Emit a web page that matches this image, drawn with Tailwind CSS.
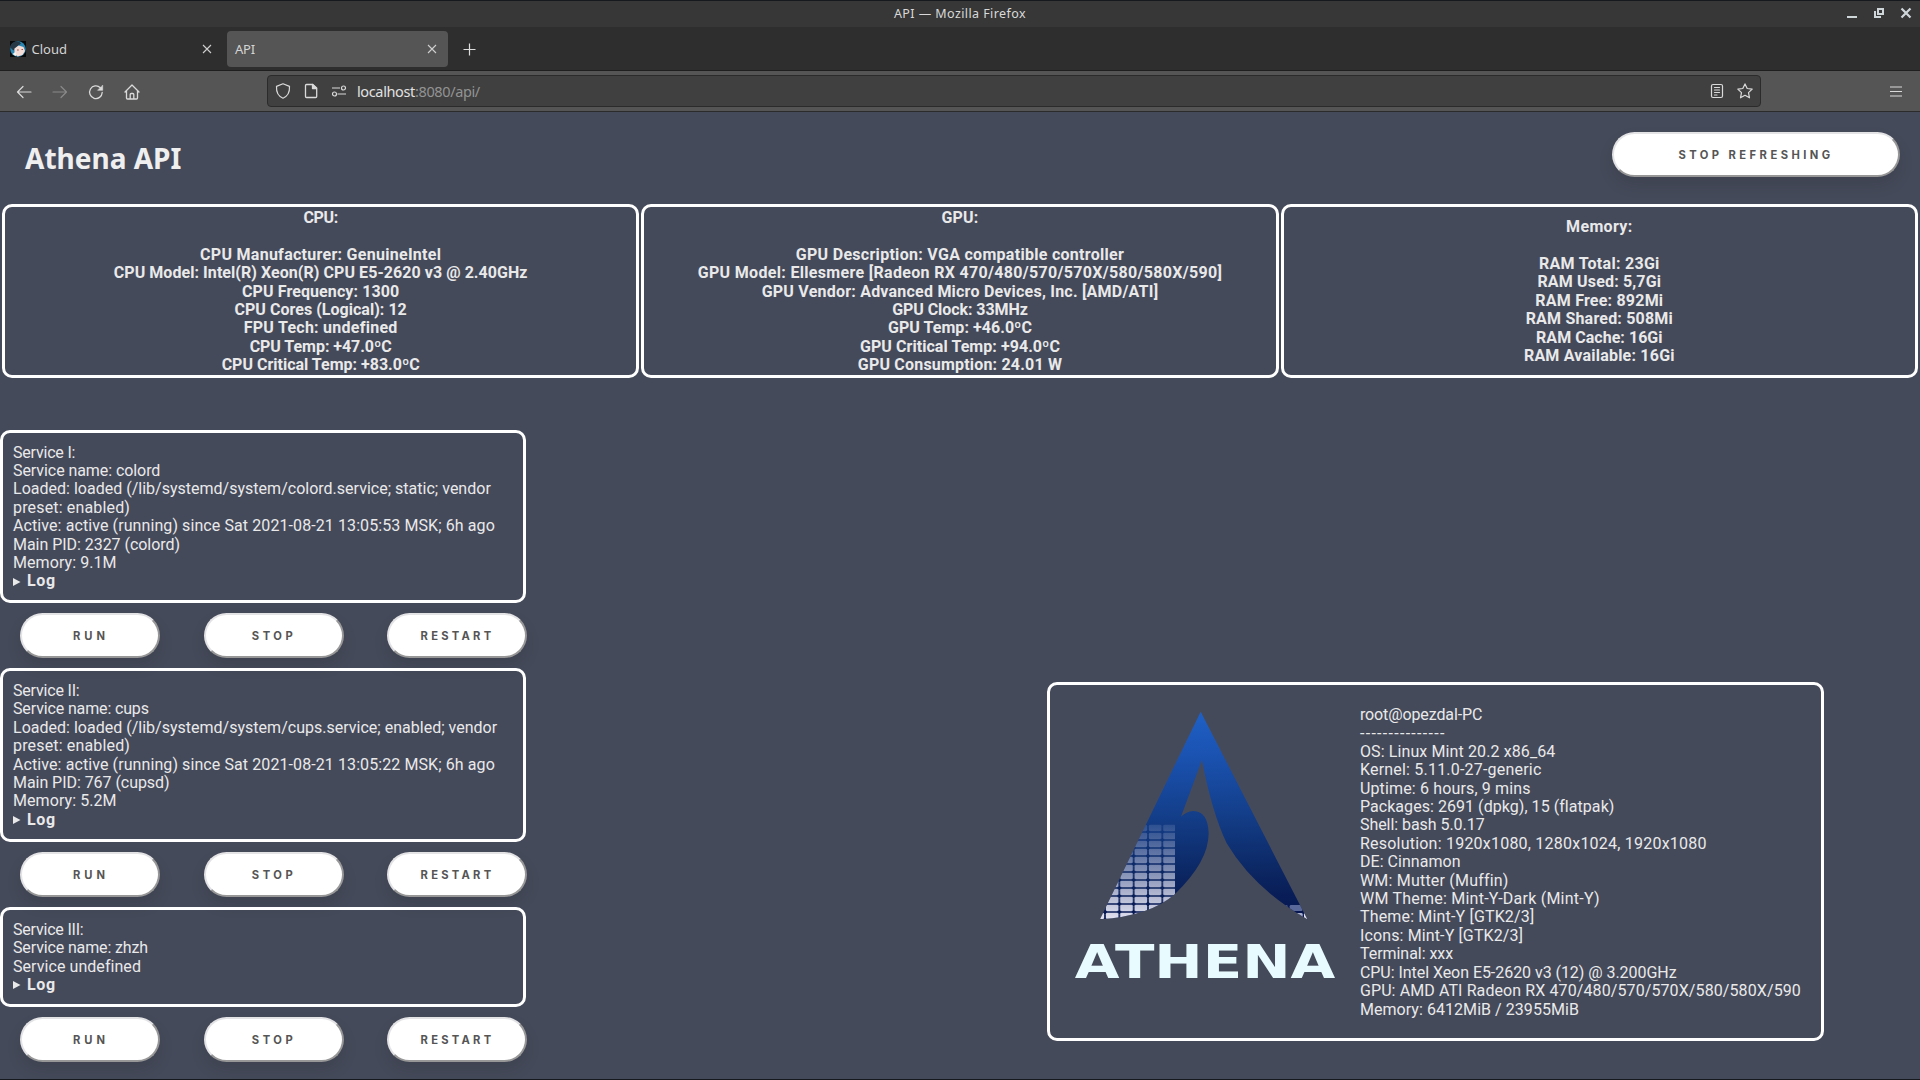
<!DOCTYPE html>
<html lang="en">
<head>
<meta charset="utf-8">
<title>API</title>
<script src="https://cdn.jsdelivr.net/npm/@tailwindcss/browser@4"></script>
</head>
<body class="w-[1920px] h-[1080px] overflow-hidden flex flex-col bg-[#454a5a] font-['Noto_Sans',sans-serif] border-b border-[#16191d]">

<!-- Window title bar -->
<div class="h-[27px] shrink-0 border-t border-[#16191d] bg-[#373737] flex items-center text-[#d9d9d9]">
  <div class="flex-1 pl-[8px]"></div>
  <div class="text-[12.5px] tracking-[0.42px]">API — Mozilla Firefox</div>
  <div class="flex-1 flex justify-end pr-[8px]">
    <svg width="66" height="16" viewBox="0 0 66 16" fill="none" stroke="#cfd6da" stroke-width="2">
      <path d="M1 11h10"/>
      <path d="M32 3h5v5h-5z M29 5v6h6"/>
      <path d="M55.500 2.500l9 9M64.500 2.500l-9 9" stroke-width="2.200"/>
    </svg>
  </div>
</div>

<!-- Tabs -->
<div class="h-[44px] shrink-0 border-b border-[#1f1f1f] bg-[#2e2e2e] flex items-center text-[13px] text-[#d4d4d4]">
  <div class="w-[227px] h-[36px] flex items-center pl-[10px] pr-[15px]">
    <svg width="16" height="16" viewBox="0 0 16 16">
      <rect width="16" height="16" fill="#080808"/>
      <circle cx="8" cy="8" r="7.800" fill="#2a86b0"/>
      <path d="M0 5.500Q2 .5 7 .5q3 0 4 2L5 7.500l-1.500 2Q1 7.500 0 5.500z" fill="#263746"/>
      <path d="M4.500 7.500L8.500 4.500l5 1.500 1.500 4-2.500 4-5 1.500-3-3z" fill="#f3dcd6"/>
      <path d="M2.500 13l3-2 1 3-1 1z" fill="#f6f2ee"/>
      <path d="M7 9h1.800M11.500 8.500h1.500" stroke="#a3564d"/>
    </svg>
    <span class="ml-[5.5px] flex-1 pt-[2px]">Cloud</span>
    <svg width="10" height="10" viewBox="0 0 10 10" stroke="#cfcfcf" stroke-width="1.100"><path d="M1 1l8 8M9 1l-8 8"/></svg>
  </div>
  <div class="w-[221px] h-[36px] rounded-[4px] bg-[#555] flex items-center pl-[8px] pr-[11px]">
    <span class="flex-1 pt-[2px] tracking-[-0.2px]">API</span>
    <svg width="10" height="10" viewBox="0 0 10 10" stroke="#cfcfcf" stroke-width="1.100"><path d="M1 1l8 8M9 1l-8 8"/></svg>
  </div>
  <svg class="ml-[15px] mt-px" width="13" height="13" viewBox="0 0 13 13" stroke="#dedede" stroke-width="1.200"><path d="M6.500 .5v12M.5 6.500h12"/></svg>
</div>

<!-- Navigation toolbar -->
<div class="h-[41px] shrink-0 border-b border-[#2b2b2b] bg-[#555] flex items-center text-[#dadada]">
  <div class="w-[267px] flex items-center gap-[20px] pl-[16px] pt-px">
    <svg width="16" height="16" viewBox="0 0 16 16" fill="none" stroke="currentColor" stroke-width="1.200" stroke-linecap="round" stroke-linejoin="round"><path d="M15 8H1.500M7 2.500L1.500 8 7 13.500"/></svg>
    <svg class="text-[#898989]" width="16" height="16" viewBox="0 0 16 16" fill="none" stroke="currentColor" stroke-width="1.200" stroke-linecap="round" stroke-linejoin="round"><path d="M1 8h13.500M9 2.500L14.500 8 9 13.500"/></svg>
    <svg width="16" height="16" viewBox="0 0 16 16" fill="none" stroke="currentColor" stroke-width="1.300" stroke-linecap="round" stroke-linejoin="round"><path d="M14.200 8.500A6.300 6.300 0 1 1 12.300 3.700"/><path d="M14.700 1.500v4.800H9.900z" fill="currentColor" stroke-width=".6"/></svg>
    <svg width="16" height="16" viewBox="0 0 16 16" fill="none" stroke="currentColor" stroke-width="1.300" stroke-linecap="round" stroke-linejoin="round"><path d="M1 8L8 1l7 7M2.500 7v7q0 1 1 1h9q1 0 1-1V7M6.200 15v-4.500q0-1 1-1h1.600q1 0 1 1V15"/></svg>
  </div>
  <div class="w-[1494px] h-[32px] rounded-[4px] border border-[#2b2b2b] bg-[#404040] flex items-center pl-[7px] pr-[7px]">
    <svg width="16" height="16" viewBox="0 0 16 16" fill="none" stroke="currentColor" stroke-width="1.200" stroke-linejoin="round"><path d="M8 .8l6.500 2.600c.3 5-1.500 9.700-6.500 11.800C3 13.100 1.200 8.400 1.500 3.400z"/></svg>
    <svg class="ml-[12px]" width="16" height="16" viewBox="0 0 16 16" fill="none" stroke="currentColor" stroke-width="1.300" stroke-linejoin="round"><path d="M3.500 1.500h6.300L13.700 5v8.500q0 1-1 1h-9.200q-1 0-1-1v-11q0-1 1-1z"/><path d="M9.500 1.500V5.500h4z" fill="currentColor"/></svg>
    <svg class="ml-[12px]" width="16" height="16" viewBox="0 0 16 16" fill="none" stroke="currentColor" stroke-width="1.200"><path d="M1 5h8M6.500 11H15"/><circle cx="12.500" cy="5" r="2"/><circle cx="3.500" cy="11" r="2"/></svg>
    <div class="ml-[10px] flex-1 pt-[2px] text-[14.5px] tracking-[-0.37px] text-[#939393]"><span class="text-[#e2e2e2]">localhost</span>:8080/api/</div>
    <svg width="16" height="16" viewBox="0 0 16 16" fill="none" stroke="currentColor" stroke-width="1.200" stroke-linecap="round"><rect x="2.500" y="1.500" width="11" height="13" rx="1.500"/><path d="M5.500 4.500h5M5.500 7h5M5.500 9.500h5M5.500 12h2.500"/></svg>
    <svg class="ml-[12px]" width="16" height="16" viewBox="0 0 16 16" fill="none" stroke="currentColor" stroke-width="1.200" stroke-linejoin="round"><path d="M8 .9l2.200 4.600 5 .6-3.700 3.500 1 5.200L8 12.300l-4.500 2.500 1-5.200L.8 6.100l5-.6z"/></svg>
  </div>
  <svg class="ml-auto mr-[18px]" width="12" height="11" viewBox="0 0 12 11" stroke="currentColor" stroke-width="1.200"><path d="M0 1h12M0 5.500h12M0 10h12"/></svg>
</div>

<!-- Page -->
<main class="flex-1 min-h-0 flex flex-col font-[Roboto,sans-serif] text-[16px] leading-[18.4px] text-[#e9e9ea]">

  <header class="h-[92px] shrink-0 flex justify-between items-start pl-[25px] pr-[20px] pt-[20px]">
    <h1 class="font-['Noto_Sans',sans-serif] font-bold text-[28px] leading-[52px] text-[#efeff0]">Athena API</h1>
    <button class="w-[288px] h-[45px] rounded-full border-2 border-t-[#e3e3e6] border-l-[#e3e3e6] border-b-[#979797] border-r-[#979797] bg-white shadow-[0_8px_15px_rgba(0,0,0,0.1)] font-[Inter,sans-serif] font-bold pt-[2px] text-[11.2px] tracking-[3.44px] text-[#555]">STOP REFRESHING</button>
  </header>

  <section class="grid grid-cols-3 gap-[2px] px-[2px] h-[174px] shrink-0 text-center font-bold whitespace-nowrap">
    <div class="border-3 border-white rounded-[10px] flex flex-col justify-center pt-[1.6px]">
      <div class="tracking-[-0.41px]">CPU:</div>
      <br>
      <div class="tracking-[0.28px]">CPU Manufacturer: GenuineIntel</div>
      <div class="tracking-[0.06px]">CPU Model: Intel(R) Xeon(R) CPU E5-2620 v3 @ 2.40GHz</div>
      <div class="tracking-[0.1px]">CPU Frequency: 1300</div>
      <div class="tracking-[0.03px]">CPU Cores (Logical): 12</div>
      <div class="tracking-[0.26px]">FPU Tech: undefined</div>
      <div class="tracking-[-0.04px]">CPU Temp: +47.0ºC</div>
      <div>CPU Critical Temp: +83.0ºC</div>
    </div>
    <div class="border-3 border-white rounded-[10px] flex flex-col justify-center pt-[1.6px]">
      <div class="tracking-[0.14px]">GPU:</div>
      <br>
      <div class="tracking-[0.29px]">GPU Description: VGA compatible controller</div>
      <div class="tracking-[0.32px]">GPU Model: Ellesmere [Radeon RX 470/480/570/570X/580/580X/590]</div>
      <div class="tracking-[0.22px]">GPU Vendor: Advanced Micro Devices, Inc. [AMD/ATI]</div>
      <div class="tracking-[-0.07px]">GPU Clock: 33MHz</div>
      <div class="tracking-[0.05px]">GPU Temp: +46.0ºC</div>
      <div class="tracking-[0.06px]">GPU Critical Temp: +94.0ºC</div>
      <div class="tracking-[0.19px]">GPU Consumption: 24.01 W</div>
    </div>
    <div class="border-3 border-white rounded-[10px] flex flex-col justify-center pt-[1.6px]">
      <div class="tracking-[0.35px]">Memory:</div>
      <br>
      <div class="tracking-[0.28px]">RAM Total: 23Gi</div>
      <div class="tracking-[0.16px]">RAM Used: 5,7Gi</div>
      <div class="tracking-[0.21px]">RAM Free: 892Mi</div>
      <div class="tracking-[0.2px]">RAM Shared: 508Mi</div>
      <div class="tracking-[0.04px]">RAM Cache: 16Gi</div>
      <div class="tracking-[0.21px]">RAM Available: 16Gi</div>
    </div>
  </section>

  <div class="flex items-start pt-[52px] whitespace-nowrap">
    <!-- Services -->
    <section class="w-[527px] flex flex-col gap-[10px]">
      <div class="w-[526px] h-[173.4px] border-3 border-white rounded-[10px] px-[10px] pt-[10.6px]">
        <div class="tracking-[-0.2px]">Service I:</div>
        <div class="tracking-[-0.07px]">Service name: colord</div>
        <div class="tracking-[0.01px]">Loaded: loaded (/lib/systemd/system/colord.service; static; vendor</div>
        <div class="tracking-[0.16px]">preset: enabled)</div>
        <div class="tracking-[0.09px]">Active: active (running) since Sat 2021-08-21 13:05:53 MSK; 6h ago</div>
        <div class="tracking-[-0.04px]">Main PID: 2327 (colord)</div>
        <div class="tracking-[0.07px]">Memory: 9.1M</div>
        <div class="flex items-center gap-[6px] font-bold tracking-[0.6px]"><svg width="8" height="8" viewBox="0 0 8 8" fill="currentColor"><path d="M0 0l7.500 4L0 8z"/></svg>Log</div>
      </div>
      <div class="flex justify-between pl-[20px] font-[Inter,sans-serif] font-bold text-[11.2px] text-[#555]">
        <button class="w-[140px] h-[45px] rounded-full border-2 border-t-[#e3e3e6] border-l-[#e3e3e6] border-b-[#979797] border-r-[#979797] bg-white shadow-[0_8px_15px_rgba(0,0,0,0.1)] pl-[2px] pt-px tracking-[4px]">RUN</button>
        <button class="w-[140px] h-[45px] rounded-full border-2 border-t-[#e3e3e6] border-l-[#e3e3e6] border-b-[#979797] border-r-[#979797] bg-white shadow-[0_8px_15px_rgba(0,0,0,0.1)] pl-px pt-px tracking-[3.5px]">STOP</button>
        <button class="w-[140px] h-[45px] rounded-full border-2 border-t-[#e3e3e6] border-l-[#e3e3e6] border-b-[#979797] border-r-[#979797] bg-white shadow-[0_8px_15px_rgba(0,0,0,0.1)] pl-px pt-px tracking-[3.24px]">RESTART</button>
      </div>
      <div class="w-[526px] h-[173.4px] border-3 border-white rounded-[10px] px-[10px] pt-[10.6px]">
        <div class="tracking-[-0.19px]">Service II:</div>
        <div class="tracking-[-0.14px]">Service name: cups</div>
        <div class="tracking-[0.01px]">Loaded: loaded (/lib/systemd/system/cups.service; enabled; vendor</div>
        <div class="tracking-[0.16px]">preset: enabled)</div>
        <div class="tracking-[0.09px]">Active: active (running) since Sat 2021-08-21 13:05:22 MSK; 6h ago</div>
        <div class="tracking-[-0.05px]">Main PID: 767 (cupsd)</div>
        <div class="tracking-[0.07px]">Memory: 5.2M</div>
        <div class="flex items-center gap-[6px] font-bold tracking-[0.6px]"><svg width="8" height="8" viewBox="0 0 8 8" fill="currentColor"><path d="M0 0l7.500 4L0 8z"/></svg>Log</div>
      </div>
      <div class="flex justify-between pl-[20px] font-[Inter,sans-serif] font-bold text-[11.2px] text-[#555]">
        <button class="w-[140px] h-[45px] rounded-full border-2 border-t-[#e3e3e6] border-l-[#e3e3e6] border-b-[#979797] border-r-[#979797] bg-white shadow-[0_8px_15px_rgba(0,0,0,0.1)] pl-[2px] pt-[2px] tracking-[4px]">RUN</button>
        <button class="w-[140px] h-[45px] rounded-full border-2 border-t-[#e3e3e6] border-l-[#e3e3e6] border-b-[#979797] border-r-[#979797] bg-white shadow-[0_8px_15px_rgba(0,0,0,0.1)] pl-px pt-[2px] tracking-[3.5px]">STOP</button>
        <button class="w-[140px] h-[45px] rounded-full border-2 border-t-[#e3e3e6] border-l-[#e3e3e6] border-b-[#979797] border-r-[#979797] bg-white shadow-[0_8px_15px_rgba(0,0,0,0.1)] pl-px pt-[2px] tracking-[3.24px]">RESTART</button>
      </div>
      <div class="w-[526px] h-[99.8px] border-3 border-white rounded-[10px] px-[10px] pt-[11px]">
        <div class="tracking-[-0.2px]">Service III:</div>
        <div class="tracking-[-0.14px]">Service name: zhzh</div>
        <div class="tracking-[0.06px]">Service undefined</div>
        <div class="flex items-center gap-[6px] font-bold tracking-[0.6px]"><svg width="8" height="8" viewBox="0 0 8 8" fill="currentColor"><path d="M0 0l7.500 4L0 8z"/></svg>Log</div>
      </div>
      <div class="flex justify-between pl-[20px] font-[Inter,sans-serif] font-bold text-[11.2px] text-[#555]">
        <button class="w-[140px] h-[45px] rounded-full border-2 border-t-[#e3e3e6] border-l-[#e3e3e6] border-b-[#979797] border-r-[#979797] bg-white shadow-[0_8px_15px_rgba(0,0,0,0.1)] pl-[2px] pt-[2px] tracking-[4px]">RUN</button>
        <button class="w-[140px] h-[45px] rounded-full border-2 border-t-[#e3e3e6] border-l-[#e3e3e6] border-b-[#979797] border-r-[#979797] bg-white shadow-[0_8px_15px_rgba(0,0,0,0.1)] pl-px pt-[2px] tracking-[3.5px]">STOP</button>
        <button class="w-[140px] h-[45px] rounded-full border-2 border-t-[#e3e3e6] border-l-[#e3e3e6] border-b-[#979797] border-r-[#979797] bg-white shadow-[0_8px_15px_rgba(0,0,0,0.1)] pl-px pt-[2px] tracking-[3.24px]">RESTART</button>
      </div>
    </section>

    <!-- System summary -->
    <section class="ml-[520px] mt-[252px] w-[777px] h-[359px] border-3 border-white rounded-[10px] flex items-start pl-[12px] pt-[21px]">
      <svg class="mt-[4px] shrink-0 overflow-visible" width="286.67" height="283.33" viewBox="66 120 860 850">
        <defs>
          <linearGradient id="blue" gradientUnits="userSpaceOnUse" x1="480" y1="125" x2="500" y2="745">
            <stop offset="0" stop-color="#1f60c6"/><stop offset=".22" stop-color="#1a52b0"/><stop offset=".55" stop-color="#123a82"/><stop offset=".8" stop-color="#0b2560"/><stop offset="1" stop-color="#061650"/>
          </linearGradient>
          <linearGradient id="fade" gradientUnits="userSpaceOnUse" x1="0" y1="455" x2="0" y2="748">
            <stop offset="0" stop-color="#c8cce4" stop-opacity=".12"/><stop offset=".35" stop-color="#c4cae4" stop-opacity=".48"/><stop offset=".7" stop-color="#cdd0e4" stop-opacity=".82"/><stop offset="1" stop-color="#e2e2f0"/>
          </linearGradient>
          <pattern id="cells" patternUnits="userSpaceOnUse" x="195" y="462" width="43" height="24"><rect x="2.500" y="2.500" width="38" height="19" rx="4" fill="#fff"/></pattern>
          <mask id="grid" maskUnits="userSpaceOnUse" x="96" y="120" width="800" height="820"><rect x="150" y="462" width="255" height="290" fill="url(#cells)"/></mask>
          <clipPath id="left"><path d="M482 125L180 748Q330 738 405 672Q506 575 506 490Q504 424 460 423Q438 425 423 440L486 270z"/></clipPath>
          <clipPath id="right"><path d="M482 125L802 748Q640 655 560 520Q515 425 486 270z"/></clipPath>
        </defs>
        <path d="M482 125L802 748Q640 655 560 520Q515 425 486 270L423 440Q438 425 460 423Q504 424 506 490Q506 575 405 672Q330 738 180 748z" fill="url(#blue)"/>
        <g clip-path="url(#left)"><rect x="150" y="455" width="255" height="295" fill="url(#fade)" mask="url(#grid)"/></g>
        <g clip-path="url(#right)"><rect x="708" y="705" width="35" height="18" rx="4" fill="#46568a"/><rect x="749" y="705" width="39" height="18" rx="4" fill="#596799"/><rect x="749" y="729" width="39" height="19" rx="4" fill="#aab0cc"/><rect x="792" y="729" width="39" height="19" rx="4" fill="#e2e2f0"/></g>
        <text x="104" y="923" textLength="782" lengthAdjust="spacingAndGlyphs" font-family="DejaVu Sans, sans-serif" font-weight="700" font-size="140" fill="#e8fcff">ATHENA</text>
      </svg>
      <div class="ml-[11.3px]">
        <div class="tracking-[-0.12px]">root@opezdal-PC</div>
        <div class="tracking-[1.29px] pt-px -mb-px">---------------</div>
        <div class="tracking-[0.11px]">OS: Linux Mint 20.2 x86_64</div>
        <div class="tracking-[0.2px]">Kernel: 5.11.0-27-generic</div>
        <div class="tracking-[0.15px]">Uptime: 6 hours, 9 mins</div>
        <div class="tracking-[0.05px]">Packages: 2691 (dpkg), 15 (flatpak)</div>
        <div class="tracking-[-0.05px]">Shell: bash 5.0.17</div>
        <div class="tracking-[0.22px]">Resolution: 1920x1080, 1280x1024, 1920x1080</div>
        <div class="tracking-[0.04px]">DE: Cinnamon</div>
        <div class="tracking-[0.2px]">WM: Mutter (Muffin)</div>
        <div class="tracking-[0.23px]">WM Theme: Mint-Y-Dark (Mint-Y)</div>
        <div class="tracking-[0.17px]">Theme: Mint-Y [GTK2/3]</div>
        <div class="tracking-[0.13px]">Icons: Mint-Y [GTK2/3]</div>
        <div class="tracking-[-0.04px]">Terminal: xxx</div>
        <div class="tracking-[-0.05px]">CPU: Intel Xeon E5-2620 v3 (12) @ 3.200GHz</div>
        <div class="tracking-[0.1px]">GPU: AMD ATI Radeon RX 470/480/570/570X/580/580X/590</div>
        <div class="tracking-[0.05px]">Memory: 6412MiB / 23955MiB</div>
      </div>
    </section>
  </div>
</main>
</body>
</html>
